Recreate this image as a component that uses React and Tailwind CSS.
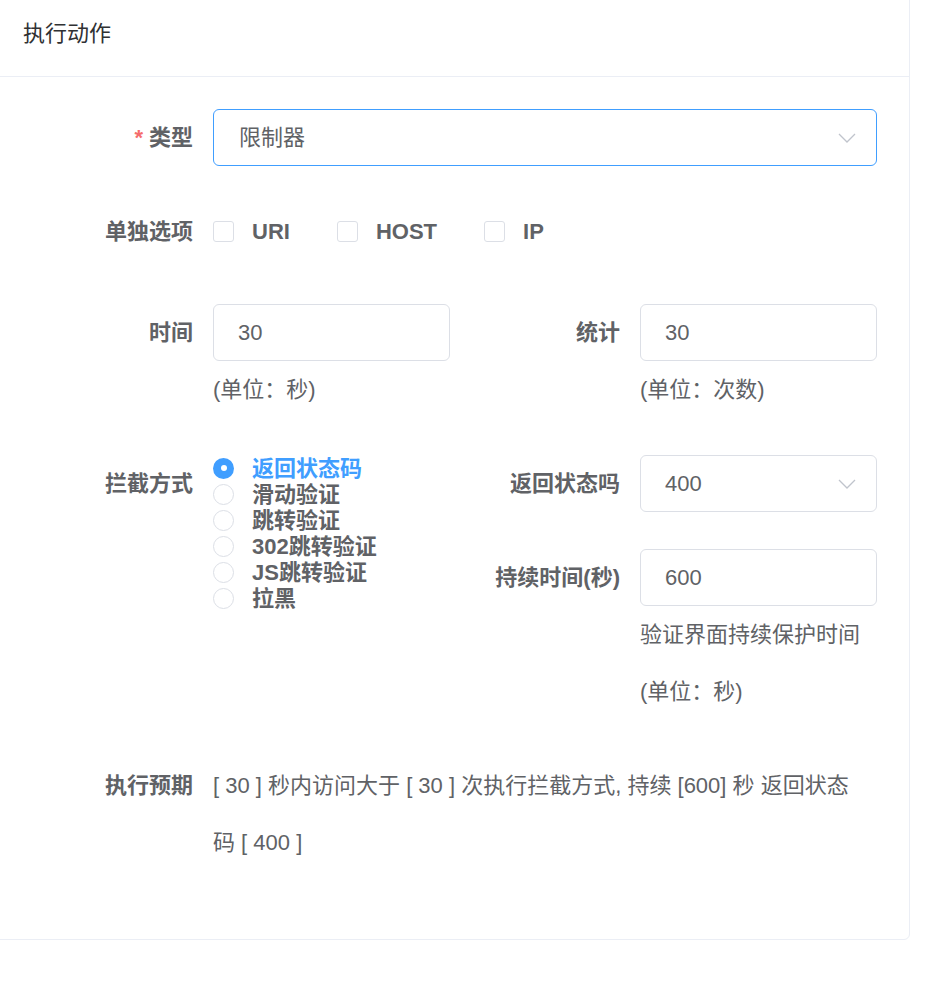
import React from "react";

const font = { fontFamily: '"Liberation Sans", "Noto Sans CJK SC", sans-serif' };

const Chevron = () => (
  <svg width="18" height="10" viewBox="0 0 18 10" fill="none" className="shrink-0">
    <path d="M1 1l8 8 8-8" stroke="#c0c4cc" strokeWidth="1.3" />
  </svg>
);

const Label = ({ children, required }) => (
  <div className="w-[190px] shrink-0 pr-[20px] text-right font-bold text-[#606266] leading-[57px] whitespace-nowrap">
    {required && <span className="mr-[6px] text-[#f56c6c]">*</span>}
    {children}
  </div>
);

const TextInput = ({ value }) => (
  <div className="h-[57px] rounded-[6px] border border-[#dcdfe6] bg-white px-[24px] flex items-center text-[#606266]">
    {value}
  </div>
);

const Checkbox = ({ label }) => (
  <label className="flex items-center mr-[47px]">
    <span className="w-[21px] h-[21px] rounded-[3px] border border-[#dcdfe6] bg-white" />
    <span className="pl-[18px] font-bold text-[#606266]">{label}</span>
  </label>
);

const Radio = ({ label, checked }) => (
  <div className="flex items-center h-[26px]">
    {checked ? (
      <span className="w-[21px] h-[21px] rounded-full bg-[#409eff] flex items-center justify-center">
        <span className="w-[6px] h-[6px] rounded-full bg-white" />
      </span>
    ) : (
      <span className="w-[21px] h-[21px] rounded-full border border-[#dcdfe6] bg-white" />
    )}
    <span className={`pl-[18px] font-bold ${checked ? "text-[#409eff]" : "text-[#606266]"}`}>
      {label}
    </span>
  </div>
);

const modes = ["返回状态码", "滑动验证", "跳转验证", "302跳转验证", "JS跳转验证", "拉黑"];

export default function App() {
  return (
    <div className="min-h-screen bg-white text-[22px]" style={font}>
      <div className="w-[918px] -ml-[8px] -mt-[11px] rounded-[6px] border border-[#ebeef5] bg-white">
        <div className="h-[87px] border-b border-[#ebeef5] pl-[30px] flex items-center text-[#303133]">
          执行动作
        </div>
        <div className="pl-[30px] pr-[32px] pt-[32px] pb-[68px]">
          <div className="flex">
            <Label required>类型</Label>
            <div className="flex-1 h-[57px] rounded-[6px] border border-[#409eff] px-[25px] pr-[20px] flex items-center justify-between text-[#606266]">
              <span>限制器</span>
              <Chevron />
            </div>
          </div>

          <div className="flex mt-[37px]">
            <Label>单独选项</Label>
            <div className="flex items-center h-[57px]">
              <Checkbox label="URI" />
              <Checkbox label="HOST" />
              <Checkbox label="IP" />
            </div>
          </div>

          <div className="grid grid-cols-2 mt-[44px]">
            <div className="flex">
              <Label>时间</Label>
              <div className="flex-1">
                <TextInput value="30" />
                <div className="leading-[57px] text-[#606266]">(单位：秒)</div>
              </div>
            </div>
            <div className="flex">
              <Label>统计</Label>
              <div className="flex-1">
                <TextInput value="30" />
                <div className="leading-[57px] text-[#606266]">(单位：次数)</div>
              </div>
            </div>
          </div>

          <div className="grid grid-cols-2 mt-[37px]">
            <div className="flex items-start">
              <Label>拦截方式</Label>
              <div className="flex-1">
                {modes.map((m, i) => (
                  <Radio key={m} label={m} checked={i === 0} />
                ))}
              </div>
            </div>
            <div>
              <div className="flex">
                <Label>返回状态吗</Label>
                <div className="flex-1 h-[57px] rounded-[6px] border border-[#dcdfe6] px-[24px] pr-[20px] flex items-center justify-between text-[#606266]">
                  <span>400</span>
                  <Chevron />
                </div>
              </div>
              <div className="flex mt-[37px]">
                <Label>持续时间(秒)</Label>
                <div className="flex-1">
                  <TextInput value="600" />
                  <div className="leading-[57px] text-[#606266]">验证界面持续保护时间</div>
                  <div className="leading-[57px] text-[#606266]">(单位：秒)</div>
                </div>
              </div>
            </div>
          </div>

          <div className="flex mt-[37px]">
            <Label>执行预期</Label>
            <div className="max-w-[650px] leading-[57px] text-[#606266]">
              [ 30 ] 秒内访问大于 [ 30 ] 次执行拦截方式, 持续 [600] 秒 返回状态码 [ 400 ]
            </div>
          </div>
        </div>
      </div>
    </div>
  );
}
